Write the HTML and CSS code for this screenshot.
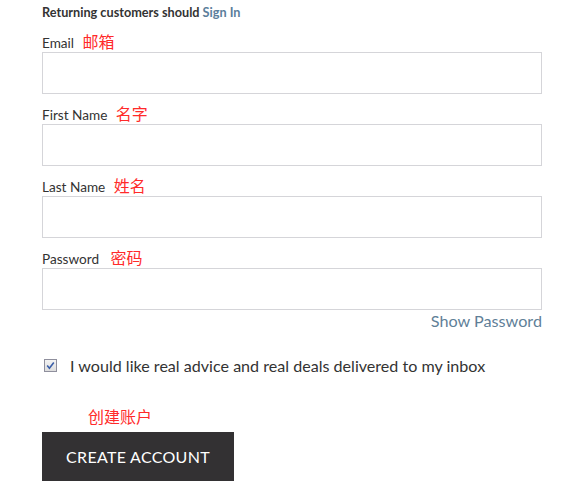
FILE: index.html
```html
<!DOCTYPE html>
<html>
<head>
<meta charset="utf-8">
<link rel="stylesheet" href="styles.css">
</head>
<body>
<div class="form">
  <div class="heading">Returning customers should <a class="link">Sign In</a></div>
  <div class="field">
    <div class="label">Email <span class="cn">邮箱</span></div>
    <div class="input"></div>
  </div>
  <div class="field">
    <div class="label">First Name <span class="cn">名字</span></div>
    <div class="input"></div>
  </div>
  <div class="field">
    <div class="label">Last Name <span class="cn">姓名</span></div>
    <div class="input"></div>
  </div>
  <div class="field last">
    <div class="label">Password <span class="cn wide">密码</span></div>
    <div class="input"></div>
  </div>
  <div class="show">Show Password</div>
  <div class="check-row">
    <span class="checkbox">
      <svg width="13" height="13" viewBox="0 0 13 13">
        <defs>
          <linearGradient id="g" x1="0" y1="0" x2="0" y2="1">
            <stop offset="0" stop-color="#f4f4f4"/>
            <stop offset="1" stop-color="#dcdcdc"/>
          </linearGradient>
        </defs>
        <rect x="0.5" y="0.5" width="12" height="12" fill="url(#g)" stroke="#8f8f9d"/>
        <path d="M3.2 6.6 L5.4 9.2 L9.8 3.4" fill="none" stroke="#3a5ea8" stroke-width="1.6"/>
      </svg>
    </span>
    <span class="check-text">I would like real advice and real deals delivered to my inbox</span>
  </div>
  <div class="cn create-cn">创建账户</div>
  <div class="button">CREATE ACCOUNT</div>
</div>
</body>
</html>
```
FILE: styles.css
```css
html, body {
  margin: 0;
  padding: 0;
  background: #ffffff;
}
body {
  font-family: "Lato", "Noto Sans CJK SC", sans-serif;
  color: #333333;
}
.form {
  width: 500px;
  padding-left: 42px;
}
.heading {
  font-size: 12.7px;
  font-weight: bold;
  line-height: 24px;
  color: #333333;
  margin-bottom: 8px;
}
.link {
  color: #5b7e9b;
}
.field {
  margin-bottom: 10px;
}
.field.last {
  margin-bottom: 0;
}
.label {
  font-size: 13.6px;
  line-height: 18px;
  height: 20px;
  color: #333333;
}
.cn {
  font-family: "Noto Sans CJK SC", sans-serif;
  color: #ff2a2a;
  font-size: 16px;
  line-height: 18px;
  margin-left: 5px;
}
.cn.wide {
  margin-left: 8px;
}
.input {
  height: 40px;
  border: 1px solid #d5d5d9;
  background: #ffffff;
}
.show {
  text-align: right;
  font-size: 16.2px;
  line-height: 22px;
  color: #5f7f98;
}
.check-row {
  display: flex;
  align-items: center;
  margin-top: 22px;
  height: 22px;
}
.checkbox {
  display: flex;
  margin-left: 2px;
  width: 13px;
  height: 13px;
}
.check-text {
  margin-left: 13px;
  font-size: 16.1px;
  color: #333333;
}
.create-cn {
  margin-left: 46px;
  margin-top: 29px;
  line-height: 22px;
  display: block;
}
.button {
  margin-top: 5px;
  width: 192px;
  height: 49px;
  background: #333133;
  color: #ffffff;
  font-size: 16px;
  letter-spacing: 0.3px;
  display: flex;
  align-items: center;
  justify-content: center;
}
```
